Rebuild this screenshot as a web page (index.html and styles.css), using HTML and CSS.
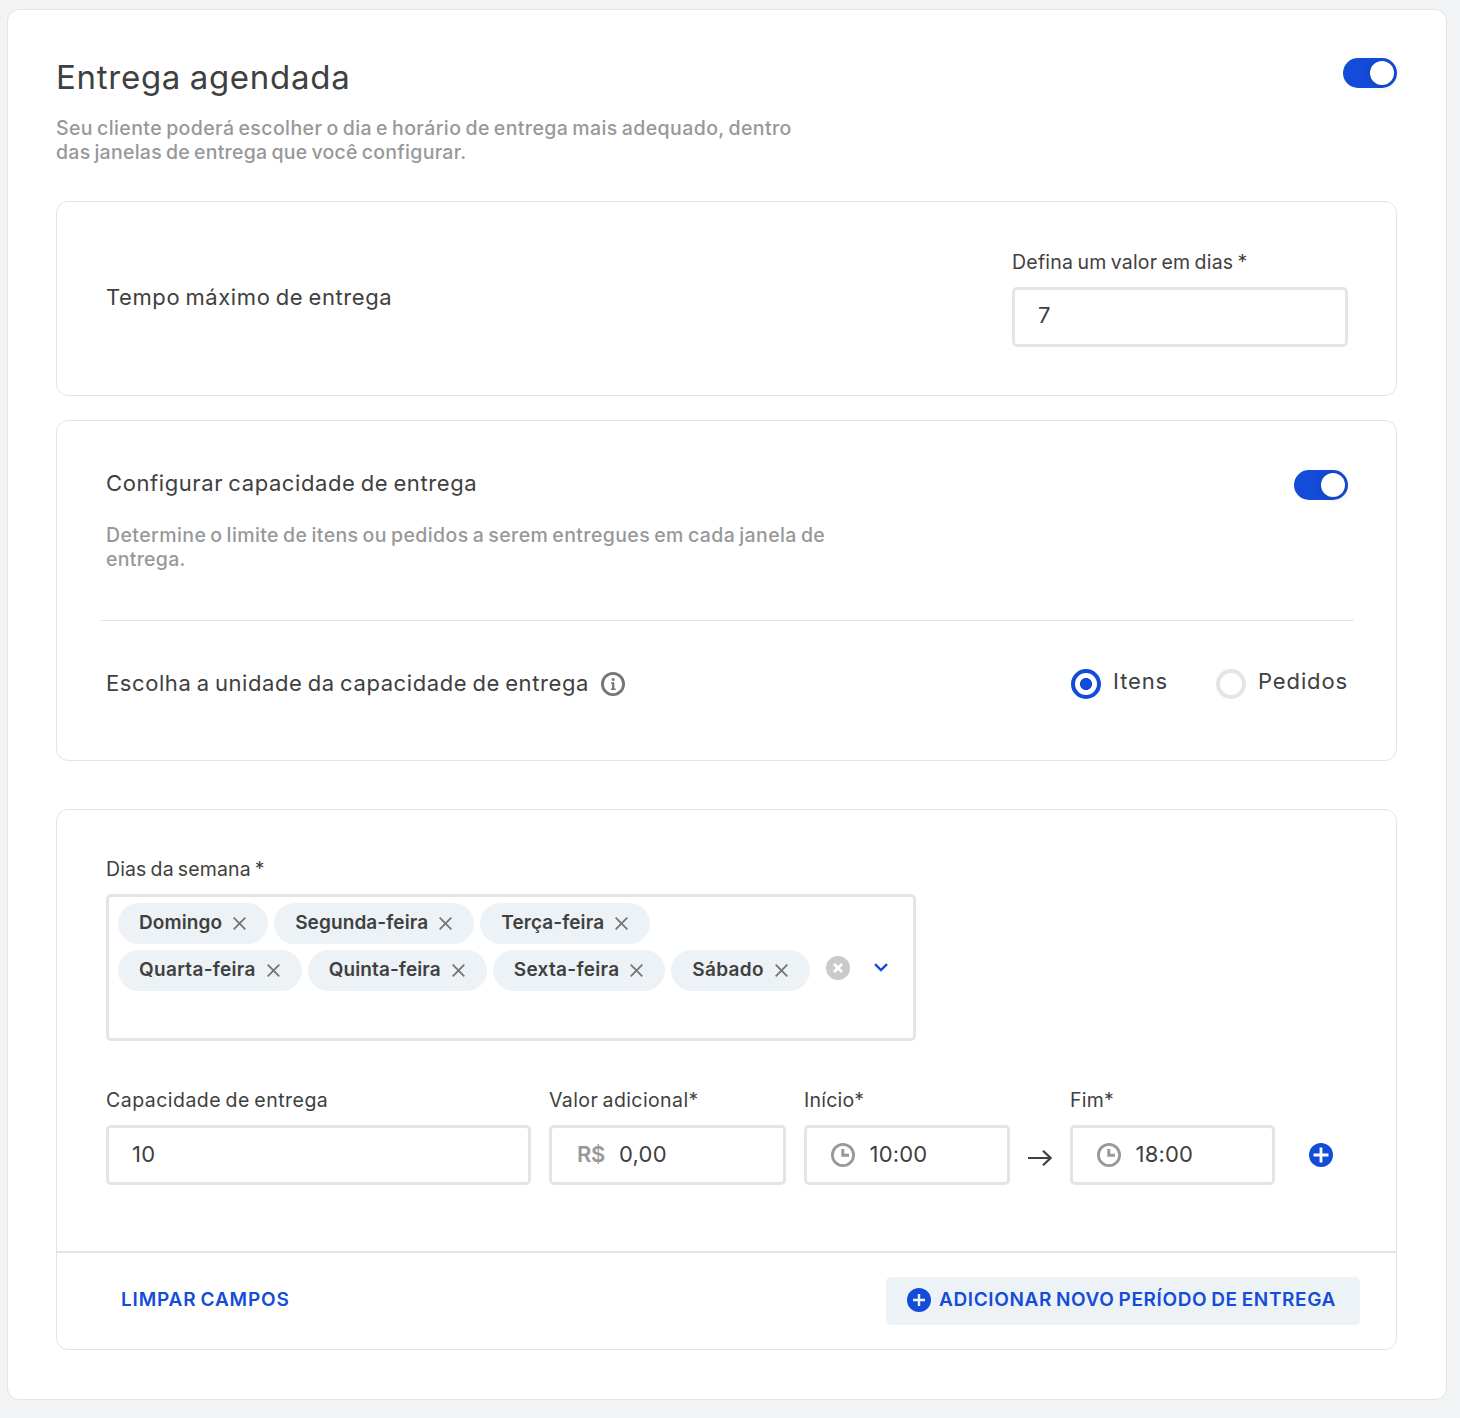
FILE: index.html
```html
<!DOCTYPE html>
<html lang="pt-BR">
<head>
<meta charset="utf-8">
<title>Entrega agendada</title>
<link rel="stylesheet" href="styles.css">
</head>
<body>
<main class="card">
  <header class="head">
    <div>
      <h1 class="title">Entrega agendada</h1>
      <p class="sub">Seu cliente poderá escolher o dia e horário de entrega mais adequado, dentro<br><span class="tight">das janelas de entrega que você configurar.</span></p>
    </div>
    <span class="toggle"></span>
  </header>

  <section class="panel max-time">
    <h2 class="heading">Tempo máximo de entrega</h2>
    <div class="field days">
      <label class="label">Defina um valor em dias *</label>
      <div class="input"><span>7</span></div>
    </div>
  </section>

  <section class="panel capacity">
    <div class="row">
      <div>
        <h2 class="heading">Configurar capacidade de entrega</h2>
        <p class="sub">Determine o limite de itens ou pedidos a serem entregues em cada janela de<br><span class="tight">entrega.</span></p>
      </div>
      <span class="toggle"></span>
    </div>
    <hr class="divider">
    <div class="row">
      <h2 class="heading unit"><span>Escolha a unidade da capacidade de entrega</span>
        <svg class="info" width="24" height="24" viewBox="0 0 24 24"><circle cx="12" cy="12" r="10.6" fill="none" stroke="#757575" stroke-width="2.8"/><path d="M10 10.2h3.3v6.3h1.3V18H9.8v-1.5h1.3v-4.8H10z" fill="#757575"/><circle cx="12.1" cy="7.4" r="1.5" fill="#757575"/></svg>
      </h2>
      <div class="radios">
        <label class="radio"><i class="dot on"></i><span>Itens</span></label>
        <label class="radio"><i class="dot"></i><span>Pedidos</span></label>
      </div>
    </div>
  </section>

  <section class="panel schedule">
    <div class="body">
      <label class="label">Dias da semana *</label>
      <div class="select">
        <div class="chips">
          <span class="chip"><span>Domingo</span><svg width="13" height="13" viewBox="0 0 13 13"><path d="M.7.7l11.6 11.6M12.3.7L.7 12.3"/></svg></span>
          <span class="chip"><span>Segunda-feira</span><svg width="13" height="13" viewBox="0 0 13 13"><path d="M.7.7l11.6 11.6M12.3.7L.7 12.3"/></svg></span>
          <span class="chip"><span>Terça-feira</span><svg width="13" height="13" viewBox="0 0 13 13"><path d="M.7.7l11.6 11.6M12.3.7L.7 12.3"/></svg></span>
          <span class="chip wide"><span>Quarta-feira</span><svg width="13" height="13" viewBox="0 0 13 13"><path d="M.7.7l11.6 11.6M12.3.7L.7 12.3"/></svg></span>
          <span class="chip"><span>Quinta-feira</span><svg width="13" height="13" viewBox="0 0 13 13"><path d="M.7.7l11.6 11.6M12.3.7L.7 12.3"/></svg></span>
          <span class="chip wide"><span>Sexta-feira</span><svg width="13" height="13" viewBox="0 0 13 13"><path d="M.7.7l11.6 11.6M12.3.7L.7 12.3"/></svg></span>
          <span class="chip wide"><span>Sábado</span><svg width="13" height="13" viewBox="0 0 13 13"><path d="M.7.7l11.6 11.6M12.3.7L.7 12.3"/></svg></span>
        </div>
        <svg class="clear" width="24" height="24" viewBox="0 0 24 24"><circle cx="12" cy="12" r="12" fill="#c9cacb"/><path d="M8 8l8 8M16 8l-8 8" stroke="#fff" stroke-width="2.8"/></svg>
        <svg class="chevron" width="14" height="9" viewBox="0 0 14 9"><path d="M1 1.2l6 5.8 6-5.8" fill="none" stroke="#134cd8" stroke-width="2.4"/></svg>
      </div>
      <div class="fields">
        <div class="field f-cap"><label class="label">Capacidade de entrega</label><div class="input"><span>10</span></div></div>
        <div class="field f-val"><label class="label">Valor adicional*</label><div class="input"><b class="prefix">R$</b><span>0,00</span></div></div>
        <div class="field f-time"><label class="label">Início*</label><div class="input"><svg class="clock" width="24" height="24" viewBox="0 0 24 24"><circle cx="12" cy="12" r="10.6" fill="none" stroke="#979899" stroke-width="2.8"/><path d="M11.8 6v6.2H18" fill="none" stroke="#979899" stroke-width="3"/></svg><span>10:00</span></div></div>
        <svg class="arrow" width="24" height="16" viewBox="0 0 24 16"><path d="M0 8h22.5M15 .8L22.6 8 15 15.2" fill="none" stroke="#3f4040" stroke-width="2.2"/></svg>
        <div class="field f-time end"><label class="label">Fim*</label><div class="input"><svg class="clock" width="24" height="24" viewBox="0 0 24 24"><circle cx="12" cy="12" r="10.6" fill="none" stroke="#979899" stroke-width="2.8"/><path d="M11.8 6v6.2H18" fill="none" stroke="#979899" stroke-width="3"/></svg><span>18:00</span></div></div>
        <svg class="plus" width="24" height="24" viewBox="0 0 24 24"><circle cx="12" cy="12" r="12" fill="#134cd8"/><path d="M12 4.5v15M4.5 12h15" stroke="#fff" stroke-width="2.8"/></svg>
      </div>
    </div>
    <footer class="foot">
      <a class="link">LIMPAR CAMPOS</a>
      <a class="button"><svg width="24" height="24" viewBox="0 0 24 24"><circle cx="12" cy="12" r="12" fill="#134cd8"/><path d="M12 6v12M6 12h12" stroke="#edf2f7" stroke-width="2.4"/></svg><span>ADICIONAR NOVO PERÍODO DE ENTREGA</span></a>
    </footer>
  </section>
</main>
</body>
</html>
```
FILE: styles.css
```css
* { box-sizing: border-box; }
body {
  margin: 0;
  padding: 9px 13px 18px 7px;
  background: #f2f3f5;
  color: #3f4040;
  font-family: Inter, "Liberation Sans", sans-serif;
  font-size: 19px;
  line-height: 24px;
  word-spacing: -1.5px;
}
h1, h2, p { margin: 0; font-weight: 400; }
.card {
  height: 1391px;
  padding: 47px 49px 0 48px;
  background: #fff;
  border: 1px solid #e3e4e6;
  border-radius: 12px;
}
.head, .row { display: flex; justify-content: space-between; align-items: flex-start; }
.title { margin-bottom: 19px; font-size: 33px; line-height: 40px; letter-spacing: .73px; }
.sub { color: #979899; font-size: 19.5px; font-weight: 450; letter-spacing: .4px; }
.tight { letter-spacing: .27px; }
.toggle {
  display: flex;
  justify-content: flex-end;
  width: 54px;
  height: 30px;
  margin-top: 1px;
  padding: 3px;
  border-radius: 15px;
  background: #134cd8;
}
.toggle::after {
  content: "";
  width: 24px;
  height: 24px;
  border-radius: 50%;
  background: #fff;
  box-shadow: 0 1px 10px rgba(0, 0, 0, .16);
}
.panel { border: 1px solid #e3e4e6; border-radius: 12px; }
.heading { font-size: 22px; line-height: 28px; letter-spacing: .59px; }
.max-time {
  display: flex;
  justify-content: space-between;
  align-items: center;
  height: 195px;
  margin-top: 37px;
  padding: 0 48px 0 49px;
}
.max-time .heading { padding-bottom: 4px; }
.days { width: 336px; }
.label {
  display: block;
  height: 37px;
  font-size: 19.5px;
  letter-spacing: .22px;
  white-space: nowrap;
}
.input {
  display: flex;
  align-items: center;
  height: 60px;
  padding: 0 0 2px 23px;
  border: 3px solid #e3e4e6;
  border-radius: 5px;
  font-size: 22px;
  letter-spacing: .2px;
}
.days .input { padding-bottom: 4px; }
.capacity { height: 341px; margin-top: 24px; padding: 48px 48px 0 49px; }
.capacity .sub { margin-top: 26px; }
.divider { margin: 49px -6px 48px; border: 0; border-top: 1px solid #e3e4e6; }
.unit { display: flex; gap: 12px; }
.info { margin-top: 3px; }
.radios { display: flex; gap: 48px; font-size: 22px; letter-spacing: .87px; }
.radio { display: flex; gap: 12px; }
.dot { width: 30px; height: 30px; border: 4px solid #e3e4e6; border-radius: 50%; }
.dot.on { border-color: #134cd8; background: radial-gradient(circle, #134cd8 5.7px, #fff 6.3px); }
.schedule { height: 541px; margin-top: 48px; }
.body { height: 441px; padding: 47px 0 0 49px; }
.body > .label { letter-spacing: .12px; }
.select {
  display: flex;
  width: 810px;
  height: 147px;
  margin-bottom: 47px;
  padding: 6px 0 0 9px;
  border: 3px solid #e3e4e6;
  border-radius: 5px;
}
.chips { display: flex; flex-wrap: wrap; align-content: flex-start; gap: 6px; width: 700px; }
.chip {
  display: flex;
  gap: 11px;
  height: 41px;
  padding: 8px 22px 0 21px;
  border-radius: 21px;
  background: #edf2f7;
  font-weight: 600;
  letter-spacing: .1px;
}
.chip.wide { letter-spacing: .3px; }
.chip svg { margin-top: 6px; fill: none; stroke: #757575; stroke-width: 1.8; }
.clear { margin: 53px 0 0 8px; }
.chevron { margin: 59.5px 0 0 24px; }
.fields { display: flex; }
.f-cap { width: 425px; }
.f-cap .label { letter-spacing: .48px; }
.f-val { width: 237px; margin-left: 18px; }
.f-val .label { letter-spacing: .4px; }
.f-time { width: 206px; margin-left: 18px; }
.f-time.end { width: 205px; }
.prefix { margin: 0 14px 0 2px; color: #979899; font-weight: 600; letter-spacing: -.3px; }
.clock { margin: 2px 14.5px 0 1px; }
.arrow { margin: 62px 0 0 18px; }
.plus { margin: 55px 0 0 34px; }
.foot {
  display: flex;
  justify-content: space-between;
  padding: 24px 36px 0 64px;
  border-top: 2px solid #e3e4e6;
  color: #134cd8;
  font-weight: 580;
}
.link { padding-top: 11px; letter-spacing: .83px; }
.button {
  display: flex;
  gap: 8px;
  width: 474px;
  height: 48px;
  padding: 11px 0 0 21px;
  border-radius: 5px;
  background: #edf2f7;
  letter-spacing: .64px;
  white-space: nowrap;
}
```
